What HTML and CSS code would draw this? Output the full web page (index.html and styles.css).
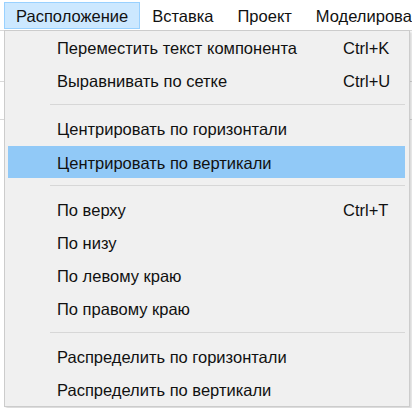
FILE: index.html
```html
<!DOCTYPE html>
<html lang="ru">
<head>
  <meta charset="UTF-8">
  <title>Расположение</title>
  <link rel="stylesheet" href="styles.css">
</head>
<body>
  <div class="menubar">
    <div class="menubar-item open">Расположение</div>
    <div class="menubar-item">Вставка</div>
    <div class="menubar-item">Проект</div>
    <div class="menubar-item">Моделирование</div>
  </div>

  <div class="backdrop">
    <div class="toolbar"></div>
    <div class="toolbar short"></div>

    <div class="dropdown">
      <div class="item"><span class="label">Переместить текст компонента</span><span class="shortcut">Ctrl+K</span></div>
      <div class="item"><span class="label">Выравнивать по сетке</span><span class="shortcut">Ctrl+U</span></div>
      <div class="separator"></div>
      <div class="item"><span class="label">Центрировать по горизонтали</span></div>
      <div class="item active"><span class="label">Центрировать по вертикали</span></div>
      <div class="separator"></div>
      <div class="item"><span class="label">По верху</span><span class="shortcut">Ctrl+T</span></div>
      <div class="item"><span class="label">По низу</span></div>
      <div class="item"><span class="label">По левому краю</span></div>
      <div class="item"><span class="label">По правому краю</span></div>
      <div class="separator"></div>
      <div class="item"><span class="label">Распределить по горизонтали</span></div>
      <div class="item"><span class="label">Распределить по вертикали</span></div>
    </div>
  </div>
</body>
</html>
```

FILE: styles.css
```css
body {
  margin: 0;
  width: 412px;
  height: 408px;
  overflow: hidden;
  background: #fff;
  font-family: 'Liberation Sans', Arial, sans-serif;
  font-size: 16.5px;
  color: #111;
}

.menubar {
  display: flex;
  height: 30px;
  padding-top: 2px;
  box-sizing: border-box;
  white-space: nowrap;
  overflow: hidden;
}
.menubar-item {
  height: 27px;
  line-height: 26px;
  padding: 0 11px;
  box-sizing: border-box;
  border: 1px solid transparent;
}
.menubar-item:first-child {
  margin-left: 4px;
}
.menubar-item.open {
  background: #cce8ff;
  border-color: #99d1ff;
}

.backdrop {
  border-top: 1px solid #d9d9d9;
  position: relative;
}
.toolbar {
  height: 50px;
  border-bottom: 1px solid #d9d9d9;
}
.toolbar.short {
  height: 37px;
}

.dropdown {
  position: absolute;
  top: -1px;
  left: 4px;
  width: 406px;
  box-sizing: border-box;
  background: #f0f0f0;
  border: 1px solid #cccccc;
  box-shadow: 2px 2px 2px rgba(0, 0, 0, 0.15);
}

.item {
  display: flex;
  align-items: center;
  height: 33px;
  padding-left: 52px;
  padding-top: 2px;
  box-sizing: border-box;
}
.item .label {
  width: 286px;
}
.item.active {
  background: #91c9f7;
  margin: 1px 4px 0 3px;
  height: 32px;
  padding-left: 49px;
}

.separator {
  height: 15px;
  display: flex;
  align-items: center;
  margin: 0 4px 0 45px;
}
.separator::before {
  content: '';
  flex: 1;
  border-top: 1px solid #d7d7d7;
}
```
